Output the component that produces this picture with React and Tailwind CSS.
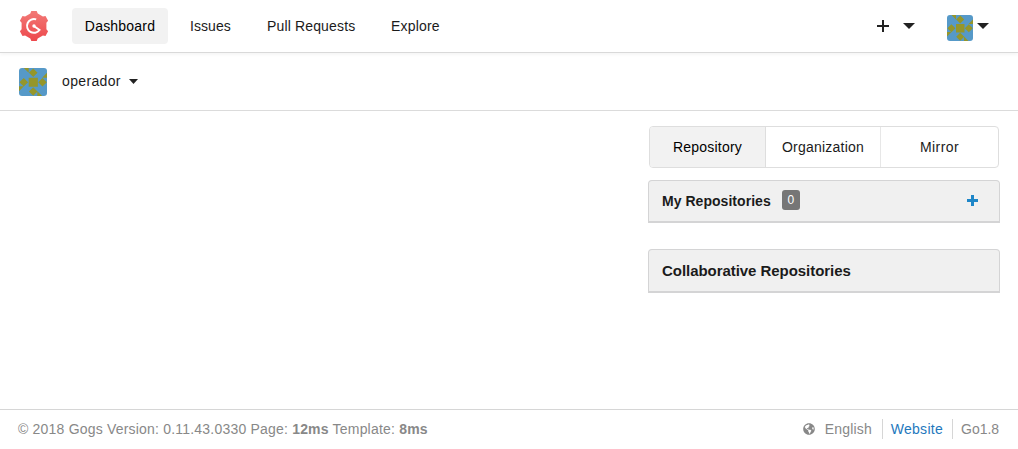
import { FaGlobeAmericas } from "react-icons/fa";

function Logo() {
  return (
    <svg className="h-[30px] w-[30px] shrink-0" viewBox="0 0 30 30">
      <defs>
        <linearGradient id="gear" x1="0" y1="0" x2="0" y2="1">
          <stop offset="0" stopColor="#f27a77" />
          <stop offset="1" stopColor="#ed484c" />
        </linearGradient>
      </defs>
      <path
        fill="url(#gear)"
        d="M12.300 0h5.400l1 2.600 5.200 3 2.600-.5 2.600 4.600-1.700 2.100v6.400l1.700 2.100-2.600 4.600-2.600-.5-5.200 3-1 2.600h-5.400l-1-2.600-5.200-3-2.600.5L.9 20.300l1.700-2.100v-6.400L.9 9.700l2.600-4.600 2.600.5 5.200-3z"
      />
      <path
        d="M17.200 8.400A6.900 6.900 0 1 0 20.500 19L15.200 15.300"
        fill="none"
        stroke="#fff"
        strokeWidth="2"
      />
      <circle cx="15" cy="15" r="1.700" fill="#fff" />
    </svg>
  );
}

function Avatar({ className }) {
  return (
    <svg className={className} viewBox="0 0 26 26">
      <path fill="#5699c8" d="M0 0h26v26H0z" />
      <path
        fill="#95962a"
        d="M9 9h8.500v8.500H9zM13.200 .4L17.200 4.400 13.200 8.400 9.200 4.400zM13.200 17.800L17.200 21.800 13.200 25.800 9.200 21.800zM4.400 9.200L8.400 13.200 4.400 17.200 .4 13.200zM21.800 9.200L25.800 13.200 21.800 17.200 17.800 13.200zM4.500 0H9v4.500zM26 4.500V9h-4.500zM17 21.500V26h4.500zM0 17h4.500L0 21.500z"
      />
    </svg>
  );
}

function Caret({ className }) {
  return (
    <svg className={className} viewBox="0 0 12 6" preserveAspectRatio="none">
      <path fill="#222" d="M0 0h12L6 6z" />
    </svg>
  );
}

function Header() {
  return (
    <header className="flex h-[53px] items-center border-b border-[#d9d9d9] pr-[29px] pb-px pl-[19px] shadow-[0_2px_3px_rgba(0,0,0,0.04)]">
      <Logo />
      <nav className="ml-[23px] flex h-9 items-center whitespace-nowrap">
        <a className="flex h-9 w-24 items-center justify-center rounded bg-[#f2f2f2] tracking-[0.200px] text-black">Dashboard</a>
        <a className="ml-[22px] w-[41px] tracking-[0.050px]">Issues</a>
        <a className="ml-[36px] w-[88px] tracking-[0.150px]">Pull Requests</a>
        <a className="ml-[36px] tracking-[0.180px]">Explore</a>
      </nav>
      <div className="ml-auto flex items-center">
        <svg className="h-3 w-3" viewBox="0 0 12 12">
          <path fill="#222" d="M5 0h2v5h5v2H7v5H5V7H0V5h5z" />
        </svg>
        <Caret className="ml-[14px] h-[6px] w-3" />
        <Avatar className="mt-1 ml-8 h-[26px] w-[26px] rounded-[3px]" />
        <Caret className="ml-[4px] h-[6px] w-3" />
      </div>
    </header>
  );
}

function Sidebar() {
  return (
    <aside className="w-[352px]">
      <div className="mx-px flex h-[42px] w-[350px] overflow-hidden rounded border border-[#dedede]">
        <a className="flex w-[116px] items-center justify-center border-r border-[#dedede] bg-[#f2f2f2] tracking-[0.220px] text-black">Repository</a>
        <a className="flex w-[115px] items-center justify-center border-r border-[#e7e7e7] tracking-[0.230px]">Organization</a>
        <a className="flex flex-1 items-center justify-center tracking-[0.400px]">Mirror</a>
      </div>
      <h4 className="mt-3 flex h-[43px] items-center rounded-t border border-b-2 border-[#d4d4d5] bg-[#f0f0f0] px-[13px] font-bold">
        <span className="tracking-[0.040px]">My Repositories</span>
        <span className="mb-[3px] ml-[11px] flex h-5 w-[18px] items-center justify-center rounded-[3px] bg-[#767676] text-xs font-normal text-white">0</span>
        <svg className="mb-px ml-auto mr-[8px] h-[11px] w-[11px]" viewBox="0 0 11 11">
          <path fill="#1e86c8" d="M4 0h3v4h4v3H7v4H4V7H0V4h4z" />
        </svg>
      </h4>
      <h4 className="mt-[26px] flex h-11 items-center rounded-t border border-b-2 border-[#d4d4d5] bg-[#f0f0f0] px-[13px] text-[15px] font-bold">
        <span className="tracking-[-0.050px]">Collaborative Repositories</span>
      </h4>
    </aside>
  );
}

export default function App() {
  return (
    <div className="flex h-[449px] w-[1018px] flex-col overflow-hidden bg-white font-['Liberation_Sans',Arial,sans-serif] text-[14px] leading-5 text-[#1b1b1b]">
      <Header />
      <div className="flex h-[58px] items-center border-b border-[#dbdbdb] pl-[19px]">
        <Avatar className="h-7 w-7 rounded-[3px]" />
        <span className="mb-0.5 ml-[15px] tracking-[0.350px]">operador</span>
        <Caret className="ml-2 h-[5px] w-[9px]" />
      </div>
      <main className="flex flex-1 justify-end pt-[15px] pr-[18px]">
        <Sidebar />
      </main>
      <footer className="flex h-10 items-center border-t border-[#d6d6d6] pr-[19px] pb-0.5 pl-[18px] whitespace-nowrap text-[#888]">
        <span className="tracking-[0.200px]">
          © 2018 Gogs Version: 0.11.43.0330 Page: <b>12ms</b> Template: <b>8ms</b>
        </span>
        <div className="ml-auto flex h-5 items-center">
          <FaGlobeAmericas className="h-3 w-3" />
          <span className="ml-[10px] w-[48px] tracking-[0.200px]">English</span>
          <a className="ml-[9px] flex h-5 items-center border-l border-[#d6d6d6] pl-2 tracking-[0.300px] text-[#1e78bd]">Website</a>
          <span className="ml-[9px] flex h-5 items-center border-l border-[#d6d6d6] pl-2 tracking-[-0.050px]">Go1.8</span>
        </div>
      </footer>
    </div>
  );
}
